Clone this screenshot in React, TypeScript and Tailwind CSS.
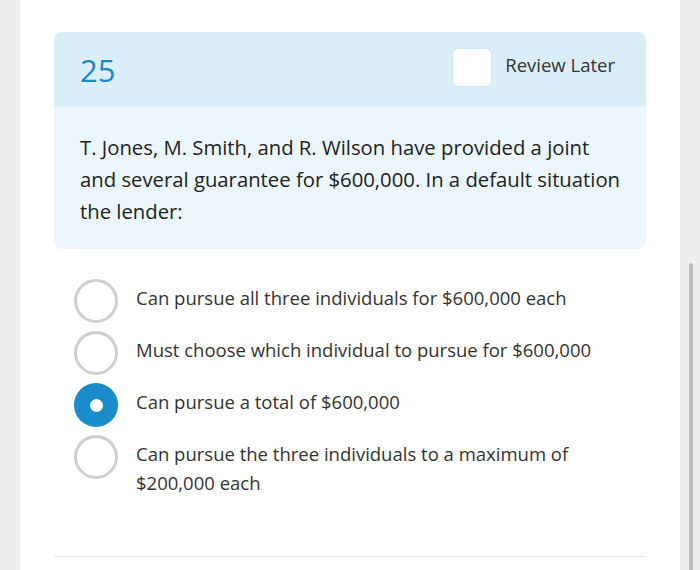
const options = [
  "Can pursue all three individuals for $600,000 each",
  "Must choose which individual to pursue for $600,000",
  "Can pursue a total of $600,000",
  "Can pursue the three individuals to a maximum of $200,000 each",
];

const selected = 2;

const Radio = ({ checked }: { checked: boolean }) =>
  checked ? (
    <div className="w-[44px] h-[44px] rounded-full bg-[#1a8bcb] flex items-center justify-center shrink-0">
      <div className="w-[13px] h-[13px] rounded-full bg-white" />
    </div>
  ) : (
    <div className="w-[44px] h-[44px] rounded-full border-[3px] border-[#cfcfcf] bg-white shrink-0" />
  );

export default function App() {
  return (
    <div
      className="h-[570px] w-[700px] bg-[#eeeeee] flex overflow-hidden"
      style={{ fontFamily: '"Open Sans", sans-serif' }}
    >
      <div className="w-[20px] shrink-0" />
      <div className="w-[660px] bg-white px-[34px] pt-[32px]">
        {/* Question */}
        <div className="rounded-lg overflow-hidden">
          <div className="bg-[#d9eef8] h-[75px] flex items-start justify-between pl-[26px] pr-[31px]">
            <span className="text-[#1b8ac5] text-[31px] font-medium leading-none mt-[23px]">25</span>
            <div className="flex items-center gap-[13px] mt-[16px]">
              <div className="w-[40px] h-[39px] bg-white rounded-[6px] border border-[#cfe6f2]" />
              <span className="text-[#333] text-[18.5px] -mt-[5px]">Review Later</span>
            </div>
          </div>
          <div className="bg-[#eaf6fc] pl-[26px] pr-[14px] pt-[24px] pb-[22px] text-[20.3px] leading-[32px] text-[#222]">
            T. Jones, M. Smith, and R. Wilson have provided a joint
            <br />
            and several guarantee for $600,000. In a default situation
            <br />
            the lender:
          </div>
        </div>

        {/* Options */}
        <div className="flex flex-col gap-[8px] mt-[30px] pl-[20px]">
          {options.map((o, i) => (
            <div key={i} className="flex items-start gap-[18px]">
              <Radio checked={i === selected} />
              <span className="text-[18.5px] leading-[29px] text-[#333] pt-[4px] w-[470px]">{o}</span>
            </div>
          ))}
        </div>

        <div className="mt-[59px] border-t border-[#e5e5e5]" />
      </div>
      <div className="w-[20px] shrink-0 relative">
        <div className="absolute left-[9px] top-[263px] w-[4px] h-[320px] bg-[#bdbdbd] rounded-full" />
      </div>
    </div>
  );
}
